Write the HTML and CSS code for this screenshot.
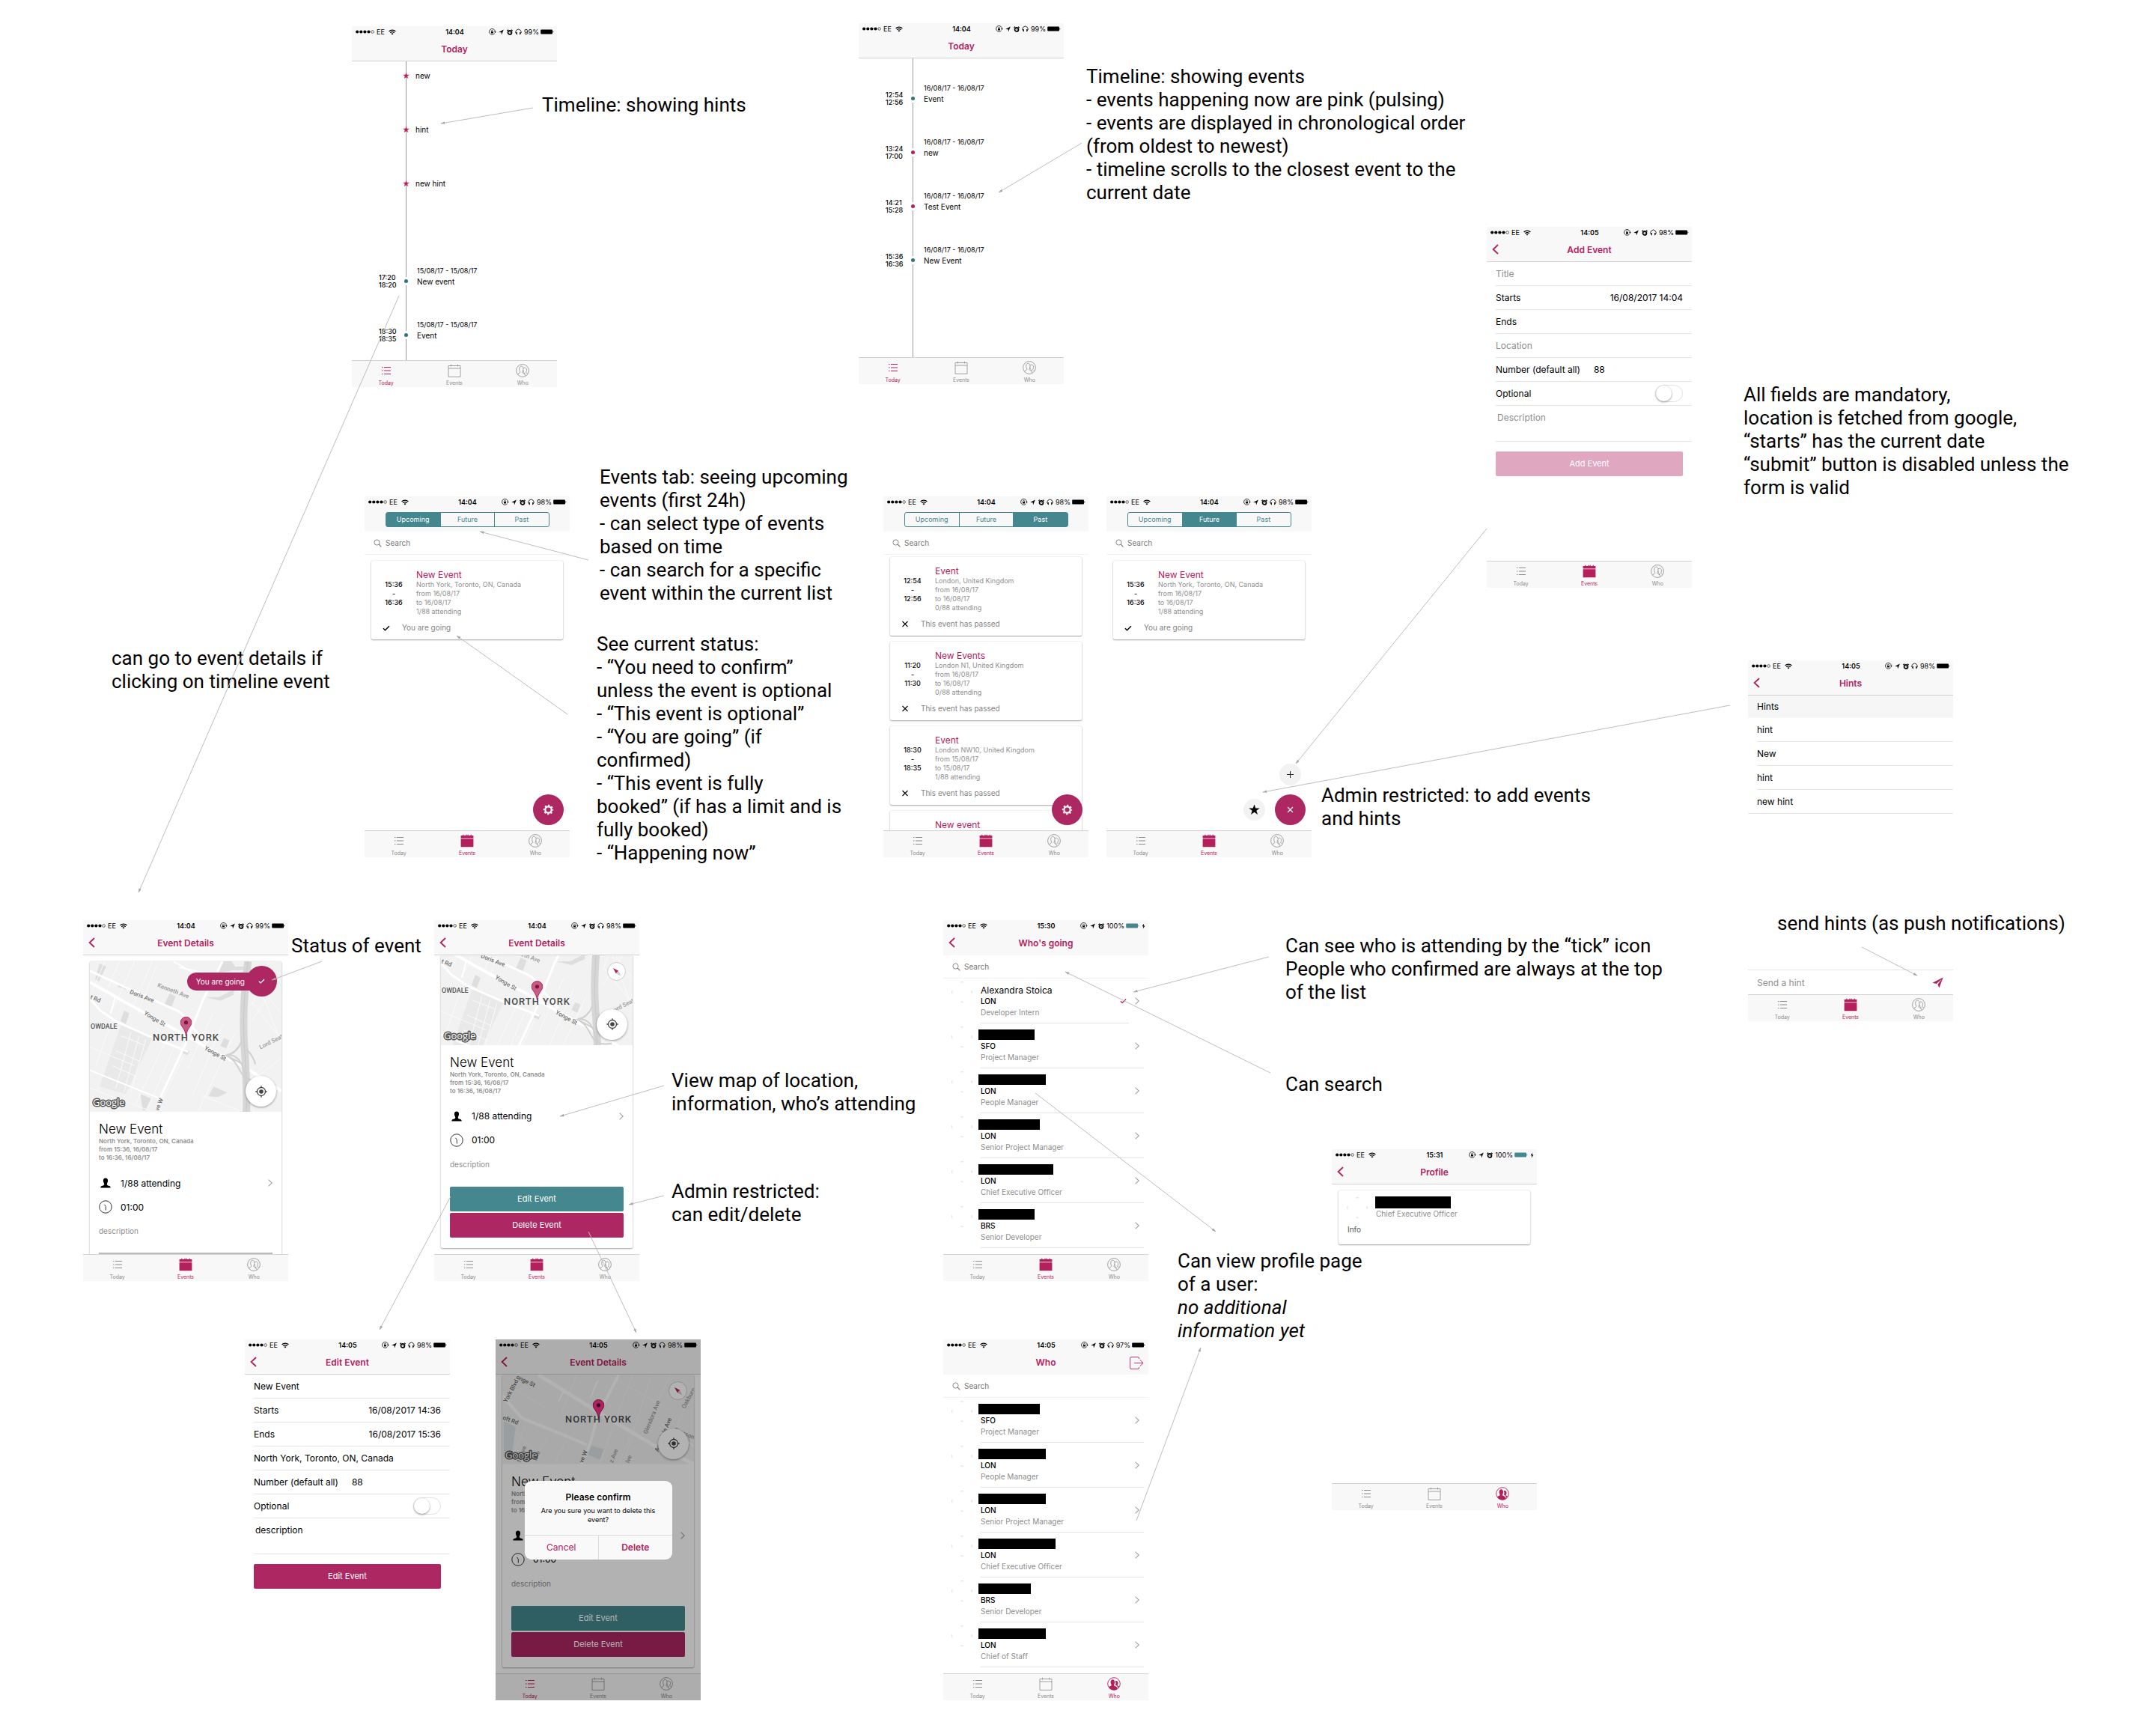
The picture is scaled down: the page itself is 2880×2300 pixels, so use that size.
FILE: index.html
```html
<!DOCTYPE html>
<html lang="en">
<head>
<meta charset="utf-8">
<title>Event app screen flow</title>
<link rel="stylesheet" href="styles.css">
</head>
<body>
<svg class="sprite" aria-hidden="true">
  <symbol id="signal" viewBox="0 0 25 5"><circle cx="2.2" cy="2.5" r="2.1"/><circle cx="7.3" cy="2.5" r="2.1"/><circle cx="12.4" cy="2.5" r="2.1"/><circle cx="17.5" cy="2.5" r="2.1"/><circle cx="22.6" cy="2.5" r="1.8" fill="none" stroke="currentColor" stroke-width=".6"/></symbol>
  <symbol id="wifi" viewBox="0 0 10 8"><path d="M.6 3a6.2 6.2 0 0 1 8.8 0M2.3 4.8a3.8 3.8 0 0 1 5.4 0" fill="none" stroke="currentColor" stroke-width="1.2"/><path d="M5 7.6 3.5 6a2.1 2.1 0 0 1 3 0z"/></symbol>
  <symbol id="lock" viewBox="0 0 10 9"><path d="M7.7 6.6A3.9 3.9 0 1 1 8.4 4.5" fill="none" stroke="currentColor" stroke-width=".8"/><path d="M7 4.3h2.8L8.4 6z"/><path d="M3 4.2h3v2.3H3z"/><path d="M3.5 4.3V3.3a1 1 0 0 1 2 0v1" fill="none" stroke="currentColor" stroke-width=".6"/></symbol>
  <symbol id="locate" viewBox="0 0 7 8"><path d="M6.8.6 4 7.5 3.7 4.2.2 3.9z"/></symbol>
  <symbol id="alarm" viewBox="0 0 8 8"><circle cx="4" cy="4.4" r="2.5" fill="none" stroke="currentColor" stroke-width="1.7"/><path d="M.4 2 2 .6M7.6 2 6 .6" stroke="currentColor" stroke-width="1.2"/><path d="M4 3v1.6h1" fill="none" stroke="currentColor" stroke-width=".5"/></symbol>
  <symbol id="phones" viewBox="0 0 9 9"><path d="M2 7.6A3.7 3.7 0 1 1 7 7.6" fill="none" stroke="currentColor" stroke-width=".8"/><path d="M1.3 5h1.5v3.2H2zM7.7 5H6.2v3.2H7z"/></symbol>
  <symbol id="battery" viewBox="0 0 18 7"><rect x=".2" y=".4" width="15.8" height="6.2" rx="1"/><path d="M16.5 2.3a1.3 1.3 0 0 1 0 2.4z"/></symbol>
  <symbol id="bolt" viewBox="0 0 5 8"><path d="M3.2.5.6 4.3H2.3L1.7 7.5 4.5 3.5H2.7z"/></symbol>
  <symbol id="back" viewBox="0 0 9 14"><path d="M8 1 1.6 7 8 13" fill="none" stroke="currentColor" stroke-width="1.8"/></symbol>
  <symbol id="next" viewBox="0 0 6 10"><path d="m.6.6 4.6 4.4L.6 9.4" fill="none" stroke="currentColor" stroke-width="1.1"/></symbol>
  <symbol id="list" viewBox="0 0 12 12"><path d="M0 1.5h1.5M0 6h1.5M0 10.5h1.5M3 1.5h9M3 6h9M3 10.5h9" stroke="currentColor" stroke-width="1"/></symbol>
  <symbol id="cal" viewBox="0 0 18 18"><path d="M1 2.5h16v14.8H1zM1 6h16M4.5.8v2.7M9 2.2V3M13.5.8v2.7" fill="none" stroke="currentColor" stroke-width=".8"/></symbol>
  <symbol id="cal-on" viewBox="0 0 18 18"><path d="M.6 2h2.6V.8h1.2V2h3V.8h1.2V2h1V.8h1.2V2h2.8V.8h1.2V2h2.6v3.6H.6zM.6 6.3h16.8V17.3H.6z"/></symbol>
  <symbol id="who" viewBox="0 0 18 18"><g fill="none" stroke="currentColor" stroke-width=".8"><circle cx="9" cy="9" r="8.4"/><path d="M2.5 14.2c.5-1.5 2.8-1.6 3.2-2.6.4-1-.9-2-1-4.3-.1-2.6 1-4.1 2.7-4.1s2.700 1.500 2.600 4.100c-.1 2.300-1.300 3.200-1 4.300.3.9 1.500 1.100 3 2.200"/><path d="M10.200 5.700c2.400-1.600 4.600.3 4.300 3-.1 1.600-1.100 2.500-.8 3.100.2.500 1.300.6 2 1.100M10 8.500c0 1.700 1 2.500.8 3.300M11.500 12c1 2 .5 3.500 1.600 4"/></g></symbol>
  <symbol id="who-on" viewBox="0 0 18 18"><circle cx="9" cy="9" r="8.300" fill="none" stroke="currentColor" stroke-width=".9"/><path d="M2 13.500c.7-1.500 3.400-1.300 3.600-2.400.2-.9-.9-1.700-1-4C4.500 4.700 5.700 3.300 7.300 3.300S10 4.700 10 7.100c-.1 2.300-1.200 3.100-1 4 .2 1.100 3.400 1.100 4 2.500l.6 2.500C10 18 5 18 2 13.500z"/><path d="M10.700 5.400c2-1.200 4 .3 3.800 2.900-.1 1.500-1 2.300-.8 2.900.2.600 1.500.6 2.300 1.300-.3 1-.9 1.800-1.500 2.300L13.300 12c-.5-.8-2-.7-2.200-1.300-.1-.6.4-1.200.4-2.500 0-1.300-.4-2-.8-2.800z"/></symbol>
  <symbol id="search" viewBox="0 0 11 11"><circle cx="4.500" cy="4.500" r="3.600" fill="none" stroke="currentColor" stroke-width=".9"/><path d="m7.200 7.200 3.200 3.200" stroke="currentColor" stroke-width="1.100"/></symbol>
  <symbol id="star" viewBox="0 0 10 10"><path d="M5 .3 6.200 3.700h3.600L6.900 5.800l1.100 3.600L5 7.200 2 9.400l1.100-3.600L.2 3.700h3.600z"/></symbol>
  <symbol id="tick" viewBox="0 0 10 8"><path d="M1 4.300 3.500 6.700 9 1.200" fill="none" stroke="currentColor" stroke-width="1.500"/></symbol>
  <symbol id="cross" viewBox="0 0 9 9"><path d="m1 1 7 7M8 1 1 8" stroke="currentColor" stroke-width="1.100"/></symbol>
  <symbol id="plus" viewBox="0 0 9 9"><path d="M4.500 0v9M0 4.500h9" stroke="currentColor" stroke-width="1"/></symbol>
  <symbol id="gear" viewBox="0 0 14 14"><circle cx="7" cy="7" r="3.900" fill="none" stroke="currentColor" stroke-width="2"/><circle cx="7" cy="7" r="5.500" fill="none" stroke="currentColor" stroke-width="1.500" stroke-dasharray="2.160 2.160" stroke-dashoffset="1.080"/></symbol>
  <symbol id="plane" viewBox="0 0 15 15"><path d="M14.600.4 9.400 14.500 7.400 10 13 2.500 5.700 9 .4 7.800z"/></symbol>
  <symbol id="logout" viewBox="0 0 19 17"><path d="M12.500 3V2A1.300 1.300 0 0 0 11.200.6H2A1.400 1.400 0 0 0 .6 2v13A1.400 1.400 0 0 0 2 16.400h9.200a1.300 1.300 0 0 0 1.300-1.400v-1M6 8.500h12M13.800 4.300l4.300 4.200-4.300 4.200" fill="none" stroke="currentColor" stroke-width=".9"/></symbol>
  <symbol id="person" viewBox="0 0 14 14"><path d="M7 .4c2 0 3.200 1.300 3.100 3.600C10 6.300 9 7 8.800 8.400c-.2 1.700 1.500 2 3.500 2.700 1 .4 1.300 1.200 1.300 2.500H.4c0-1.300.3-2.100 1.300-2.500 2-.7 3.700-1 3.500-2.700C5 7 4 6.300 3.900 4 3.800 1.700 5 .4 7 .4z"/></symbol>
  <symbol id="clock" viewBox="0 0 18 18"><circle cx="9" cy="9" r="8.200" fill="none" stroke="currentColor" stroke-width="1"/><path d="M7.500 5.800 9.300 8.500V13.500" fill="none" stroke="currentColor" stroke-width="1"/></symbol>
  <symbol id="avatar" viewBox="0 0 28 28"><path d="M12 .8h4M12 27.200h4M.8 12v4M27.200 12v4" stroke="#ddd" stroke-width="1"/></symbol>
  <symbol id="target" viewBox="0 0 16 16"><g fill="none" stroke="currentColor"><circle cx="8" cy="8" r="5.500" stroke-width="1.300"/><path d="M8 .3v2.500M8 13.200v2.500M.3 8h2.500M13.200 8h2.500" stroke-width="1.300"/></g><circle cx="8" cy="8" r="2.800"/></symbol>
  <symbol id="compass" viewBox="0 0 12 12"><path d="M1 1 8.200 4.800 4.800 8.200z" fill="#b4205c"/><path d="M11.500 11.500 8.200 4.800 4.800 8.200z" fill="#ccc"/></symbol>
  <symbol id="pin" viewBox="0 0 16 27"><path d="M8 .6A7.400 7.400 0 0 0 .6 8C.6 13.500 7 15.500 8 26.500 9 15.500 15.400 13.500 15.400 8A7.400 7.400 0 0 0 8 .6z" fill="#c95a86" stroke="#b02a64" stroke-width="1"/><circle cx="8" cy="8" r="2.600" fill="#7c173f"/></symbol>
  <symbol id="pin-dark" viewBox="0 0 16 27"><path d="M8 .6A7.400 7.400 0 0 0 .6 8C.6 13.500 7 15.500 8 26.500 9 15.500 15.400 13.500 15.400 8A7.400 7.400 0 0 0 8 .6z" fill="#ff2e88" stroke="#902454" stroke-width="1"/><circle cx="8" cy="8" r="2.600" fill="#581030"/></symbol>
  <defs>
  <g id="city">
    <rect width="257" height="202" fill="#f2f2f2"/>
    <path d="M43 82 85 101 48 178 13 168z" fill="#e9e9e9"/>
    <g fill="#dedede"><path d="m46 66 7 4-5 14-7-4zM107 43l8 4-6 16-9-5zM180 103l7 3-4 11-8-4zM126 117l8 3-3 6-7-3zM166 168l18 8-12 6-13-1zM13 3l9 4-10 20-5-3zM38 32l12 2-1 4-12-4zM178 0h12l5 7h12v5h-16l-18 4zM155 48l18 0 20-10v7l-18 8zM68 178l14 6-8 16-3 0z"/></g>
    <g fill="none" stroke="#fafafa" stroke-width="1">
      <path d="M20 0 4 38M40 0 18 50M60 0 32 62M84 0 58 60M30 78 8 140M90 5 64 70M240 0 217 60M217 80 257 20M217 20l40 50M217 55l40 50M222 20 257 110M217 160l40-30M220 202l-9-40 30-30M150 60l-30 60M165 70l-34 74M178 85l-40 94M195 95l-50 107M150 180l50 20M100 110 62 190M112 118 78 196M125 128 98 184M0 115 60 140M0 170l80 30M55 95l-20 75M66 100l-20 75M75 105l-20 70M42 100l30 12M35 120l32 14M30 140l32 14"/>
    </g>
    <g fill="none" stroke="#fff">
      <path d="M0 28 51 57 114 91 181 129Q205 138 229 156L257 174" stroke-width="4"/>
      <path d="M0 13 57 39 108 62Q124 68 130 78T157 110" stroke-width="3"/>
      <path d="M178 0 152 51 129 109 94 184 89 202" stroke-width="3"/>
      <path d="M0 50 14 66 36 81 81 101 132 121" stroke-width="3"/>
      <path d="M0 146 94 184M112 0 150 22 205 42M28 70 34 48M120 8l60 14" stroke-width="2"/>
    </g>
    <path d="M212 0C207 40 205 80 207 110S211 160 210 202" fill="none" stroke="#d6d6d6" stroke-width="10"/>
    <path d="M212 0C207 40 205 80 207 110S211 160 210 202" fill="none" stroke="#c9c9c9" stroke-width="1"/>
    <path d="M203 108c-4 12-12 16-20 18 12-2 20 6 24 22 3 12 2 20 2 26M198 116c-3 6-8 9-15 10 9 4 14 12 18 20 4 8 10 16 28 12M210 118c6 6 10 12 12 20M183 126l22 12" fill="none" stroke="#d0d0d0" stroke-width="2"/>
    <g class="street">
      <text transform="translate(53 43) rotate(21)">Doris Ave</text>
      <text transform="translate(90 34) rotate(21)" class="faint">Kenneth Ave</text>
      <text transform="translate(72 71) rotate(31)">Yonge St</text>
      <text transform="translate(153 118) rotate(29)">Yonge St</text>
      <text transform="translate(0 50) rotate(22)">t Rd</text>
      <text transform="translate(229 118) rotate(-27)" class="faint">Lord Seat</text>
      <text transform="translate(92 201) rotate(-68)">ve W</text>
    </g>
    <text x="1" y="90" class="district">OWDALE</text>
    <text x="129" y="106" class="town">NORTH YORK</text>
    <use href="#pin" x="121" y="74" width="16" height="27"/>
  </g>
  <g id="city-close">
    <rect width="257" height="120" fill="#f2f2f2"/>
    <g fill="none" stroke="#fafafa" stroke-width="1"><path d="M20 0 8 30M100 0 80 50M175 0 140 90M200 0 165 110M225 0 195 70M257 10l-30 80M0 60l60 60M30 70 10 120M60 85 40 120M85 90l-15 30M150 70l-20 50M170 85l-14 35M0 10 60 45M140 0l90 50"/></g>
    <path d="m2 62 16 8-6 44-10-4zM119 95l17 5-5 14-16-6zM236 88l16-8v14l-12 10z" fill="#dbe4e6"/>
    <g fill="none" stroke="#fff">
      <path d="M48 0 128 50 200 93 257 120" stroke-width="5"/>
      <path d="M156 0 128 55 118 92 106 120" stroke-width="4"/>
      <path d="M0 28 26 58 70 76 113 94" stroke-width="4"/>
      <path d="M214 66l43 30M85 18l-10 18M118 32l10-24" stroke-width="2"/>
    </g>
    <g class="street">
      <text transform="translate(18 5) rotate(26)">onge St</text>
      <text transform="translate(6 38) rotate(-62)">York Blvd</text>
      <text transform="translate(0 60) rotate(20)">oft Rd</text>
      <text transform="translate(194 80) rotate(-68)" class="faint">Glendora Ave</text>
      <text transform="translate(209 104) rotate(-68)">Avondale Ave</text>
      <text transform="translate(230 76) rotate(22)" class="faint">Everson</text>
      <text transform="translate(245 46) rotate(-62)" class="faint">Oakburn</text>
      <text transform="translate(24 118) rotate(-68)" class="faint">tti Ave</text>
      <text transform="translate(46 116) rotate(-68)" class="faint">Ave</text>
      <text transform="translate(108 119) rotate(-68)">ve W</text>
      <text transform="translate(148 119) rotate(-68)" class="faint">z Ave</text>
      <text transform="translate(170 119) rotate(-68)" class="faint">lve</text>
    </g>
    <text x="129" y="64" class="town">NORTH YORK</text>
    <use href="#pin-dark" x="121" y="33" width="16" height="27"/>
  </g>
  </defs>
</svg>

<main class="board">

<section class="phone at-timeline-hints" aria-label="Timeline with hints">
  <header class="top">
    <div class="status"><span><svg class="i-signal"><use href="#signal"/></svg>EE<svg class="i-wifi"><use href="#wifi"/></svg></span><b>14:04</b><span><svg class="i-lock"><use href="#lock"/></svg><svg class="i-loc"><use href="#locate"/></svg><svg class="i-alarm"><use href="#alarm"/></svg><svg class="i-phones"><use href="#phones"/></svg>99%<svg class="i-battery"><use href="#battery"/></svg></span></div>
    <div class="nav"><h2>Today</h2></div>
  </header>
  <div class="content">
    <ol class="timeline from-hint">
      <li class="hint"><svg><use href="#star"/></svg>new</li>
      <li class="hint"><svg><use href="#star"/></svg>hint</li>
      <li class="hint last"><svg><use href="#star"/></svg>new hint</li>
      <li class="moment"><span class="times">17:20<br>18:20</span><i class="dot"></i><span class="what"><small>15/08/17 - 15/08/17</small>New event</span></li>
      <li class="moment"><span class="times">18:30<br>18:35</span><i class="dot"></i><span class="what"><small>15/08/17 - 15/08/17</small>Event</span></li>
    </ol>
  </div>
  <nav class="tabs"><a href="#" class="on"><svg class="i-list"><use href="#list"/></svg>Today</a><a href="#"><svg><use href="#cal"/></svg>Events</a><a href="#"><svg><use href="#who"/></svg>Who</a></nav>
</section>

<section class="phone at-timeline-events" aria-label="Timeline with events">
  <header class="top">
    <div class="status"><span><svg class="i-signal"><use href="#signal"/></svg>EE<svg class="i-wifi"><use href="#wifi"/></svg></span><b>14:04</b><span><svg class="i-lock"><use href="#lock"/></svg><svg class="i-loc"><use href="#locate"/></svg><svg class="i-alarm"><use href="#alarm"/></svg><svg class="i-phones"><use href="#phones"/></svg>99%<svg class="i-battery"><use href="#battery"/></svg></span></div>
    <div class="nav"><h2>Today</h2></div>
  </header>
  <div class="content">
    <ol class="timeline">
      <li class="moment"><span class="times">12:54<br>12:56</span><i class="dot"></i><span class="what"><small>16/08/17 - 16/08/17</small>Event</span></li>
      <li class="moment"><span class="times">13:24<br>17:00</span><i class="dot now"></i><span class="what"><small>16/08/17 - 16/08/17</small>new</span></li>
      <li class="moment"><span class="times">14:21<br>15:28</span><i class="dot now"></i><span class="what"><small>16/08/17 - 16/08/17</small>Test Event</span></li>
      <li class="moment"><span class="times">15:36<br>16:36</span><i class="dot"></i><span class="what"><small>16/08/17 - 16/08/17</small>New Event</span></li>
    </ol>
  </div>
  <nav class="tabs"><a href="#" class="on"><svg class="i-list"><use href="#list"/></svg>Today</a><a href="#"><svg><use href="#cal"/></svg>Events</a><a href="#"><svg><use href="#who"/></svg>Who</a></nav>
</section>

<section class="phone at-add-event" aria-label="Add event">
  <header class="top">
    <div class="status"><span><svg class="i-signal"><use href="#signal"/></svg>EE<svg class="i-wifi"><use href="#wifi"/></svg></span><b>14:05</b><span><svg class="i-lock"><use href="#lock"/></svg><svg class="i-loc"><use href="#locate"/></svg><svg class="i-alarm"><use href="#alarm"/></svg><svg class="i-phones"><use href="#phones"/></svg>98%<svg class="i-battery"><use href="#battery"/></svg></span></div>
    <div class="nav"><button class="back" aria-label="Back"><svg><use href="#back"/></svg></button><h2>Add Event</h2></div>
  </header>
  <form class="content form">
    <div class="row"><input type="text" placeholder="Title" aria-label="Title"></div>
    <label class="row"><span>Starts</span><input class="end" type="text" value="16/08/2017 14:04"></label>
    <label class="row"><span>Ends</span><input class="end" type="text"></label>
    <div class="row"><input type="text" placeholder="Location" aria-label="Location"></div>
    <label class="row"><span>Number (default all)</span><input type="text" value="88"></label>
    <label class="row"><span>Optional</span><input class="switch" type="checkbox"></label>
    <div class="row tall"><textarea placeholder="Description" aria-label="Description"></textarea></div>
    <button class="wide" type="button" disabled>Add Event</button>
  </form>
  <nav class="tabs"><a href="#"><svg class="i-list"><use href="#list"/></svg>Today</a><a href="#" class="on"><svg><use href="#cal-on"/></svg>Events</a><a href="#"><svg><use href="#who"/></svg>Who</a></nav>
</section>

<section class="phone at-upcoming" aria-label="Upcoming events">
  <header class="top plain">
    <div class="status"><span><svg class="i-signal"><use href="#signal"/></svg>EE<svg class="i-wifi"><use href="#wifi"/></svg></span><b>14:04</b><span><svg class="i-lock"><use href="#lock"/></svg><svg class="i-loc"><use href="#locate"/></svg><svg class="i-alarm"><use href="#alarm"/></svg><svg class="i-phones"><use href="#phones"/></svg>98%<svg class="i-battery"><use href="#battery"/></svg></span></div>
    <div class="nav"><div class="segments"><button class="on">Upcoming</button><button>Future</button><button>Past</button></div></div>
  </header>
  <label class="search"><svg><use href="#search"/></svg><input type="search" placeholder="Search" aria-label="Search"></label>
  <div class="content cards">
    <article class="card event"><p class="when"><time>15:36</time><span>-</span><time>16:36</time></p><div><h3>New Event</h3><p class="facts">North York, Toronto, ON, Canada<br>from 16/08/17<br>to 16/08/17<br>1/88 attending</p></div><p class="state"><svg><use href="#tick"/></svg>You are going</p></article>
    <button class="fab" aria-label="Settings"><svg class="i-gear"><use href="#gear"/></svg></button>
  </div>
  <nav class="tabs"><a href="#"><svg class="i-list"><use href="#list"/></svg>Today</a><a href="#" class="on"><svg><use href="#cal-on"/></svg>Events</a><a href="#"><svg><use href="#who"/></svg>Who</a></nav>
</section>

<section class="phone at-past" aria-label="Past events">
  <header class="top plain">
    <div class="status"><span><svg class="i-signal"><use href="#signal"/></svg>EE<svg class="i-wifi"><use href="#wifi"/></svg></span><b>14:04</b><span><svg class="i-lock"><use href="#lock"/></svg><svg class="i-loc"><use href="#locate"/></svg><svg class="i-alarm"><use href="#alarm"/></svg><svg class="i-phones"><use href="#phones"/></svg>98%<svg class="i-battery"><use href="#battery"/></svg></span></div>
    <div class="nav"><div class="segments"><button>Upcoming</button><button>Future</button><button class="on">Past</button></div></div>
  </header>
  <label class="search"><svg><use href="#search"/></svg><input type="search" placeholder="Search" aria-label="Search"></label>
  <div class="content cards scrolled">
    <article class="card event"><p class="when"><time>12:54</time><span>-</span><time>12:56</time></p><div><h3>Event</h3><p class="facts">London, United Kingdom<br>from 16/08/17<br>to 16/08/17<br>0/88 attending</p></div><p class="state"><svg class="i-cross"><use href="#cross"/></svg>This event has passed</p></article>
    <article class="card event"><p class="when"><time>11:20</time><span>-</span><time>11:30</time></p><div><h3>New Events</h3><p class="facts">London N1, United Kingdom<br>from 16/08/17<br>to 16/08/17<br>0/88 attending</p></div><p class="state"><svg class="i-cross"><use href="#cross"/></svg>This event has passed</p></article>
    <article class="card event"><p class="when"><time>18:30</time><span>-</span><time>18:35</time></p><div><h3>Event</h3><p class="facts">London NW10, United Kingdom<br>from 15/08/17<br>to 15/08/17<br>1/88 attending</p></div><p class="state"><svg class="i-cross"><use href="#cross"/></svg>This event has passed</p></article>
    <article class="card event"><p class="when"></p><div><h3>New event</h3></div></article>
    <button class="fab" aria-label="Settings"><svg class="i-gear"><use href="#gear"/></svg></button>
  </div>
  <nav class="tabs"><a href="#"><svg class="i-list"><use href="#list"/></svg>Today</a><a href="#" class="on"><svg><use href="#cal-on"/></svg>Events</a><a href="#"><svg><use href="#who"/></svg>Who</a></nav>
</section>

<section class="phone at-future" aria-label="Future events">
  <header class="top plain">
    <div class="status"><span><svg class="i-signal"><use href="#signal"/></svg>EE<svg class="i-wifi"><use href="#wifi"/></svg></span><b>14:04</b><span><svg class="i-lock"><use href="#lock"/></svg><svg class="i-loc"><use href="#locate"/></svg><svg class="i-alarm"><use href="#alarm"/></svg><svg class="i-phones"><use href="#phones"/></svg>98%<svg class="i-battery"><use href="#battery"/></svg></span></div>
    <div class="nav"><div class="segments"><button>Upcoming</button><button class="on">Future</button><button>Past</button></div></div>
  </header>
  <label class="search"><svg><use href="#search"/></svg><input type="search" placeholder="Search" aria-label="Search"></label>
  <div class="content cards">
    <article class="card event"><p class="when"><time>15:36</time><span>-</span><time>16:36</time></p><div><h3>New Event</h3><p class="facts">North York, Toronto, ON, Canada<br>from 16/08/17<br>to 16/08/17<br>1/88 attending</p></div><p class="state"><svg><use href="#tick"/></svg>You are going</p></article>
    <button class="mini above" aria-label="Add event"><svg class="i-plus"><use href="#plus"/></svg></button>
    <button class="mini beside" aria-label="Hints"><svg class="i-star"><use href="#star"/></svg></button>
    <button class="fab" aria-label="Close"><svg class="i-close"><use href="#cross"/></svg></button>
  </div>
  <nav class="tabs"><a href="#"><svg class="i-list"><use href="#list"/></svg>Today</a><a href="#" class="on"><svg><use href="#cal-on"/></svg>Events</a><a href="#"><svg><use href="#who"/></svg>Who</a></nav>
</section>

<section class="phone at-hints" aria-label="Hints">
  <header class="top">
    <div class="status"><span><svg class="i-signal"><use href="#signal"/></svg>EE<svg class="i-wifi"><use href="#wifi"/></svg></span><b>14:05</b><span><svg class="i-lock"><use href="#lock"/></svg><svg class="i-loc"><use href="#locate"/></svg><svg class="i-alarm"><use href="#alarm"/></svg><svg class="i-phones"><use href="#phones"/></svg>98%<svg class="i-battery"><use href="#battery"/></svg></span></div>
    <div class="nav"><button class="back" aria-label="Back"><svg><use href="#back"/></svg></button><h2>Hints</h2></div>
  </header>
  <div class="content">
    <h3 class="group">Hints</h3>
    <ul class="plain-list"><li>hint</li><li>New</li><li>hint</li><li>new hint</li></ul>
  </div>
  <form class="send"><input type="text" placeholder="Send a hint" aria-label="Send a hint"><button type="button" aria-label="Send"><svg><use href="#plane"/></svg></button></form>
  <nav class="tabs"><a href="#"><svg class="i-list"><use href="#list"/></svg>Today</a><a href="#" class="on"><svg><use href="#cal-on"/></svg>Events</a><a href="#"><svg><use href="#who"/></svg>Who</a></nav>
</section>

<section class="phone at-details" aria-label="Event details">
  <header class="top">
    <div class="status"><span><svg class="i-signal"><use href="#signal"/></svg>EE<svg class="i-wifi"><use href="#wifi"/></svg></span><b>14:04</b><span><svg class="i-lock"><use href="#lock"/></svg><svg class="i-loc"><use href="#locate"/></svg><svg class="i-alarm"><use href="#alarm"/></svg><svg class="i-phones"><use href="#phones"/></svg>99%<svg class="i-battery"><use href="#battery"/></svg></span></div>
    <div class="nav"><button class="back" aria-label="Back"><svg><use href="#back"/></svg></button><h2>Event Details</h2></div>
  </header>
  <div class="content details unscrolled">
    <article class="card">
      <div class="map"><svg viewBox="0 0 257 202" role="img" aria-label="Map of North York"><use href="#city"/><text x="4" y="194" class="brand">Google</text></svg><p class="going"><span>You are going</span><svg><use href="#tick"/></svg></p><button class="target" aria-label="Centre map"><svg><use href="#target"/></svg></button></div>
      <div class="info">
        <h3>New Event</h3>
        <p class="place">North York, Toronto, ON, Canada<br>from 15:36, 16/08/17<br>to 16:36, 16/08/17</p>
        <a class="line" href="#"><svg class="i-person"><use href="#person"/></svg>1/88 attending<svg class="i-next"><use href="#next"/></svg></a>
        <p class="line"><svg class="i-clock"><use href="#clock"/></svg>01:00</p>
        <p class="about">description</p>
        <hr class="edge">
      </div>
    </article>
  </div>
  <nav class="tabs"><a href="#"><svg class="i-list"><use href="#list"/></svg>Today</a><a href="#" class="on"><svg><use href="#cal-on"/></svg>Events</a><a href="#"><svg><use href="#who"/></svg>Who</a></nav>
</section>

<section class="phone at-admin" aria-label="Event details for admins">
  <header class="top">
    <div class="status"><span><svg class="i-signal"><use href="#signal"/></svg>EE<svg class="i-wifi"><use href="#wifi"/></svg></span><b>14:04</b><span><svg class="i-lock"><use href="#lock"/></svg><svg class="i-loc"><use href="#locate"/></svg><svg class="i-alarm"><use href="#alarm"/></svg><svg class="i-phones"><use href="#phones"/></svg>98%<svg class="i-battery"><use href="#battery"/></svg></span></div>
    <div class="nav"><button class="back" aria-label="Back"><svg><use href="#back"/></svg></button><h2>Event Details</h2></div>
  </header>
  <div class="content details">
    <article class="card">
      <div class="map"><svg viewBox="0 40 257 120" role="img" aria-label="Map of North York"><use href="#city"/><text x="4" y="152" class="brand">Google</text></svg><button class="compass" aria-label="Compass"><svg><use href="#compass"/></svg></button><button class="target" aria-label="Centre map"><svg><use href="#target"/></svg></button></div>
      <div class="info">
        <h3>New Event</h3>
        <p class="place">North York, Toronto, ON, Canada<br>from 15:36, 16/08/17<br>to 16:36, 16/08/17</p>
        <a class="line" href="#"><svg class="i-person"><use href="#person"/></svg>1/88 attending<svg class="i-next"><use href="#next"/></svg></a>
        <p class="line"><svg class="i-clock"><use href="#clock"/></svg>01:00</p>
        <p class="about">description</p>
        <div class="actions"><button class="wide edit">Edit Event</button><button class="wide">Delete Event</button></div>
      </div>
    </article>
  </div>
  <nav class="tabs"><a href="#"><svg class="i-list"><use href="#list"/></svg>Today</a><a href="#" class="on"><svg><use href="#cal-on"/></svg>Events</a><a href="#"><svg><use href="#who"/></svg>Who</a></nav>
</section>

<section class="phone at-going" aria-label="Who's going">
  <header class="top plain">
    <div class="status"><span><svg class="i-signal"><use href="#signal"/></svg>EE<svg class="i-wifi"><use href="#wifi"/></svg></span><b>15:30</b><span><svg class="i-lock"><use href="#lock"/></svg><svg class="i-loc"><use href="#locate"/></svg><svg class="i-alarm"><use href="#alarm"/></svg>100%<svg class="i-battery charging"><use href="#battery"/></svg><svg class="i-bolt"><use href="#bolt"/></svg></span></div>
    <div class="nav"><button class="back" aria-label="Back"><svg><use href="#back"/></svg></button><h2>Who's going</h2></div>
  </header>
  <label class="search"><svg><use href="#search"/></svg><input type="search" placeholder="Search" aria-label="Search"></label>
  <ul class="content people">
    <li><svg class="avatar"><use href="#avatar"/></svg><div><strong>Alexandra Stoica</strong><b>LON</b><span>Developer Intern</span></div><svg class="i-yes"><use href="#tick"/></svg><svg class="i-next"><use href="#next"/></svg></li>
    <li><svg class="avatar"><use href="#avatar"/></svg><div><i class="redacted" style="width:75px"></i><b>SFO</b><span>Project Manager</span></div><svg class="i-next"><use href="#next"/></svg></li>
    <li><svg class="avatar"><use href="#avatar"/></svg><div><i class="redacted" style="width:90px"></i><b>LON</b><span>People Manager</span></div><svg class="i-next"><use href="#next"/></svg></li>
    <li><svg class="avatar"><use href="#avatar"/></svg><div><i class="redacted" style="width:82px"></i><b>LON</b><span>Senior Project Manager</span></div><svg class="i-next"><use href="#next"/></svg></li>
    <li><svg class="avatar"><use href="#avatar"/></svg><div><i class="redacted" style="width:100px"></i><b>LON</b><span>Chief Executive Officer</span></div><svg class="i-next"><use href="#next"/></svg></li>
    <li><svg class="avatar"><use href="#avatar"/></svg><div><i class="redacted" style="width:75px"></i><b>BRS</b><span>Senior Developer</span></div><svg class="i-next"><use href="#next"/></svg></li>
  </ul>
  <nav class="tabs"><a href="#"><svg class="i-list"><use href="#list"/></svg>Today</a><a href="#" class="on"><svg><use href="#cal-on"/></svg>Events</a><a href="#"><svg><use href="#who"/></svg>Who</a></nav>
</section>

<section class="phone at-profile" aria-label="Profile">
  <header class="top">
    <div class="status"><span><svg class="i-signal"><use href="#signal"/></svg>EE<svg class="i-wifi"><use href="#wifi"/></svg></span><b>15:31</b><span><svg class="i-lock"><use href="#lock"/></svg><svg class="i-loc"><use href="#locate"/></svg><svg class="i-alarm"><use href="#alarm"/></svg>100%<svg class="i-battery charging"><use href="#battery"/></svg><svg class="i-bolt"><use href="#bolt"/></svg></span></div>
    <div class="nav"><button class="back" aria-label="Back"><svg><use href="#back"/></svg></button><h2>Profile</h2></div>
  </header>
  <div class="content cards">
    <article class="card profile"><svg class="avatar"><use href="#avatar"/></svg><div><i class="redacted" style="width:101px"></i><span>Chief Executive Officer</span></div><p>Info</p></article>
  </div>
  <nav class="tabs"><a href="#"><svg class="i-list"><use href="#list"/></svg>Today</a><a href="#"><svg><use href="#cal"/></svg>Events</a><a href="#" class="on"><svg><use href="#who-on"/></svg>Who</a></nav>
</section>

<section class="phone at-edit" aria-label="Edit event">
  <header class="top">
    <div class="status"><span><svg class="i-signal"><use href="#signal"/></svg>EE<svg class="i-wifi"><use href="#wifi"/></svg></span><b>14:05</b><span><svg class="i-lock"><use href="#lock"/></svg><svg class="i-loc"><use href="#locate"/></svg><svg class="i-alarm"><use href="#alarm"/></svg><svg class="i-phones"><use href="#phones"/></svg>98%<svg class="i-battery"><use href="#battery"/></svg></span></div>
    <div class="nav"><button class="back" aria-label="Back"><svg><use href="#back"/></svg></button><h2>Edit Event</h2></div>
  </header>
  <form class="content form">
    <div class="row"><input type="text" value="New Event" aria-label="Title"></div>
    <label class="row"><span>Starts</span><input class="end" type="text" value="16/08/2017 14:36"></label>
    <label class="row"><span>Ends</span><input class="end" type="text" value="16/08/2017 15:36"></label>
    <div class="row"><input type="text" value="North York, Toronto, ON, Canada" aria-label="Location"></div>
    <label class="row"><span>Number (default all)</span><input type="text" value="88"></label>
    <label class="row"><span>Optional</span><input class="switch" type="checkbox"></label>
    <div class="row tall"><textarea aria-label="Description">description</textarea></div>
    <button class="wide" type="button">Edit Event</button>
  </form>
</section>

<section class="phone at-confirm" aria-label="Confirm deletion">
  <header class="top">
    <div class="status"><span><svg class="i-signal"><use href="#signal"/></svg>EE<svg class="i-wifi"><use href="#wifi"/></svg></span><b>14:05</b><span><svg class="i-lock"><use href="#lock"/></svg><svg class="i-loc"><use href="#locate"/></svg><svg class="i-alarm"><use href="#alarm"/></svg><svg class="i-phones"><use href="#phones"/></svg>98%<svg class="i-battery"><use href="#battery"/></svg></span></div>
    <div class="nav"><button class="back" aria-label="Back"><svg><use href="#back"/></svg></button><h2>Event Details</h2></div>
  </header>
  <div class="content details">
    <article class="card">
      <div class="map"><svg viewBox="0 0 257 120" role="img" aria-label="Map of North York"><use href="#city-close"/><text x="4" y="112" class="brand">Google</text></svg><button class="compass" aria-label="Compass"><svg><use href="#compass"/></svg></button><button class="target" aria-label="Centre map"><svg><use href="#target"/></svg></button></div>
      <div class="info">
        <h3>New Event</h3>
        <p class="place">North York, Toronto, ON, Canada<br>from 15:36, 16/08/17<br>to 16:36, 16/08/17</p>
        <a class="line" href="#"><svg class="i-person"><use href="#person"/></svg>1/88 attending<svg class="i-next"><use href="#next"/></svg></a>
        <p class="line"><svg class="i-clock"><use href="#clock"/></svg>01:00</p>
        <p class="about">description</p>
        <div class="actions"><button class="wide edit">Edit Event</button><button class="wide">Delete Event</button></div>
      </div>
    </article>
  </div>
  <nav class="tabs"><a href="#" class="on"><svg class="i-list"><use href="#list"/></svg>Today</a><a href="#"><svg><use href="#cal"/></svg>Events</a><a href="#"><svg><use href="#who"/></svg>Who</a></nav>
  <div class="veil">
    <div class="alert" role="alertdialog" aria-label="Please confirm">
      <h3>Please confirm</h3>
      <p>Are you sure you want to delete this event?</p>
      <div class="choices"><button>Cancel</button><button class="strong">Delete</button></div>
    </div>
  </div>
</section>

<section class="phone at-who" aria-label="Who">
  <header class="top plain">
    <div class="status"><span><svg class="i-signal"><use href="#signal"/></svg>EE<svg class="i-wifi"><use href="#wifi"/></svg></span><b>14:05</b><span><svg class="i-lock"><use href="#lock"/></svg><svg class="i-loc"><use href="#locate"/></svg><svg class="i-alarm"><use href="#alarm"/></svg><svg class="i-phones"><use href="#phones"/></svg>97%<svg class="i-battery"><use href="#battery"/></svg></span></div>
    <div class="nav"><h2>Who</h2><button class="logout" aria-label="Log out"><svg><use href="#logout"/></svg></button></div>
  </header>
  <label class="search"><svg><use href="#search"/></svg><input type="search" placeholder="Search" aria-label="Search"></label>
  <ul class="content people">
    <li><svg class="avatar"><use href="#avatar"/></svg><div><i class="redacted" style="width:82px"></i><b>SFO</b><span>Project Manager</span></div><svg class="i-next"><use href="#next"/></svg></li>
    <li><svg class="avatar"><use href="#avatar"/></svg><div><i class="redacted" style="width:90px"></i><b>LON</b><span>People Manager</span></div><svg class="i-next"><use href="#next"/></svg></li>
    <li><svg class="avatar"><use href="#avatar"/></svg><div><i class="redacted" style="width:90px"></i><b>LON</b><span>Senior Project Manager</span></div><svg class="i-next"><use href="#next"/></svg></li>
    <li><svg class="avatar"><use href="#avatar"/></svg><div><i class="redacted" style="width:103px"></i><b>LON</b><span>Chief Executive Officer</span></div><svg class="i-next"><use href="#next"/></svg></li>
    <li><svg class="avatar"><use href="#avatar"/></svg><div><i class="redacted" style="width:70px"></i><b>BRS</b><span>Senior Developer</span></div><svg class="i-next"><use href="#next"/></svg></li>
    <li><svg class="avatar"><use href="#avatar"/></svg><div><i class="redacted" style="width:90px"></i><b>LON</b><span>Chief of Staff</span></div><svg class="i-next"><use href="#next"/></svg></li>
  </ul>
  <nav class="tabs"><a href="#"><svg class="i-list"><use href="#list"/></svg>Today</a><a href="#"><svg><use href="#cal"/></svg>Events</a><a href="#" class="on"><svg><use href="#who-on"/></svg>Who</a></nav>
</section>

<p class="note on-hints-timeline">Timeline: showing hints</p>
<p class="note on-events-timeline">Timeline: showing events<br>- events happening now are pink (pulsing)<br>- events are displayed in chronological order<br>(from oldest to newest)<br>- timeline scrolls to the closest event to the<br>current date</p>
<p class="note on-form">All fields are mandatory,<br>location is fetched from google,<br>“starts” has the current date<br>“submit” button is disabled unless the<br>form is valid</p>
<p class="note on-tabs">Events tab: seeing upcoming<br>events (first 24h)<br>- can select type of events<br>based on time<br>- can search for a specific<br>event within the current list</p>
<p class="note on-status">See current status:<br>- “You need to confirm”<br>unless the event is optional<br>- “This event is optional”<br>- “You are going” (if<br>confirmed)<br>- “This event is fully<br>booked” (if has a limit and is<br>fully booked)<br>- “Happening now”</p>
<p class="note on-menu">Admin restricted: to add events<br>and hints</p>
<p class="note on-click">can go to event details if<br>clicking on timeline event</p>
<p class="note on-going">Status of event</p>
<p class="note on-map">View map of location,<br>information, who’s attending</p>
<p class="note on-admin">Admin restricted:<br>can edit/delete</p>
<p class="note on-tick">Can see who is attending by the “tick” icon<br>People who confirmed are always at the top<br>of the list</p>
<p class="note on-search">Can search</p>
<p class="note on-profile">Can view profile page<br>of a user:<br><em>no additional<br>information yet</em></p>
<p class="note on-send">send hints (as push notifications)</p>

<svg class="arrows" aria-hidden="true">
  <defs><marker id="tip" viewBox="0 0 6 4" refX="5.500" refY="2" markerWidth="6" markerHeight="4" orient="auto"><path d="M0 .2 6 2 0 3.800z" fill="#a8a8a8"/></marker></defs>
  <path d="M712 144 589 165"/>
  <path d="M1445 191 1334 257"/>
  <path d="M533 395 185 1192"/>
  <path d="M786 748 641 710"/>
  <path d="M758 954 610 849"/>
  <path d="M1986 706 1731 1020"/>
  <path d="M2311 942 1687 1058"/>
  <path d="M2487 1265 2561 1303"/>
  <path d="M430 1284 363 1309"/>
  <path d="M887 1450 748 1491"/>
  <path d="M887 1597 840 1609"/>
  <path d="M602 1598 507 1776"/>
  <path d="M786 1645 850 1780"/>
  <path d="M1695 1278 1514 1325"/>
  <path d="M1697 1433 1423 1298"/>
  <path d="M1383 1460 1624 1645"/>
  <path d="M1518 2031 1604 1800"/>
</svg>
</main>
</body>
</html>
```
FILE: styles.css
```css
:root {
  --pink: #ad2862;
  --title: #b4205c;
  --teal: #44878f;
  --bar: #f8f8f8;
  --rule: #e4e4e4;
  --grey: #8e8e8e;
}

* { box-sizing: border-box; margin: 0; padding: 0; }
body { background: #fff; color: #000; font-family: Inter, "Liberation Sans", sans-serif; }
button, input, textarea { font: inherit; color: inherit; background: none; border: 0; outline: 0; appearance: none; }
a { color: inherit; text-decoration: none; }
ol, ul { list-style: none; }
svg { display: block; flex: none; fill: currentColor; }
.sprite { position: absolute; width: 0; height: 0; }

/* Canvas */
.board { position: relative; min-height: 100vh; overflow: hidden; }
.phone, .note { position: absolute; }
.arrows { position: absolute; inset: 0; width: 100%; height: 100%; pointer-events: none; }
.arrows > path { fill: none; stroke: #bdbdbd; stroke-width: 1; marker-end: url(#tip); }

.at-timeline-hints { left: 470px; top: 35px; }
.at-timeline-events { left: 1147px; top: 31px; }
.at-add-event { left: 1986px; top: 303px; }
.at-upcoming { left: 487px; top: 663px; }
.at-past { left: 1180px; top: 663px; }
.at-future { left: 1478px; top: 663px; }
.at-hints { left: 2335px; top: 882px; }
.at-details { left: 111px; top: 1229px; }
.at-admin { left: 580px; top: 1229px; }
.at-going { left: 1260px; top: 1229px; }
.at-profile { left: 1779px; top: 1535px; }
.at-edit { left: 327px; top: 1789px; }
.at-confirm { left: 662px; top: 1789px; }
.at-who { left: 1260px; top: 1789px; }

.note { font: 26px/31px Roboto, "Liberation Sans", sans-serif; white-space: nowrap; }
.on-hints-timeline { left: 724px; top: 125px; }
.on-events-timeline { left: 1451px; top: 87px; }
.on-form { left: 2329px; top: 512px; }
.on-tabs { left: 801px; top: 622px; }
.on-status { left: 797px; top: 845px; }
.on-menu { left: 1765px; top: 1047px; }
.on-click { left: 149px; top: 864px; }
.on-going { left: 389px; top: 1248px; }
.on-map { left: 897px; top: 1428px; }
.on-admin { left: 897px; top: 1576px; }
.on-tick { left: 1717px; top: 1248px; }
.on-search { left: 1717px; top: 1433px; }
.on-profile { left: 1573px; top: 1669px; }
.on-send { left: 2374px; top: 1218px; }

/* Phone frame */
.phone { display: flex; flex-direction: column; width: 274px; height: 482px; overflow: hidden; background: #fff; font-size: 12px; line-height: 15px; }
.content { position: relative; flex: 1; min-height: 0; overflow: hidden; }
.top { flex: none; background: var(--bar); border-bottom: 1px solid #d2d2d2; }
.top.plain { border-bottom-color: var(--bar); }
.status { display: grid; grid-template-columns: 1fr auto 1fr; align-items: center; height: 15px; padding: 0 4px 0 5px; font-size: 9px; line-height: 15px; }
.status b { font-weight: 600; }
.status span { display: flex; align-items: center; gap: 3px; }
.status span:last-child { justify-content: flex-end; }
.i-signal { width: 25px; height: 5px; }
.i-wifi { width: 10px; height: 8px; margin-left: 2px; }
.i-lock { width: 10px; height: 9px; }
.i-loc { width: 7px; height: 8px; }
.i-alarm { width: 8px; height: 8px; margin-left: 1px; }
.i-phones { width: 9px; height: 9px; }
.i-battery { width: 18px; height: 7px; margin-left: -1px; }
.i-battery.charging { color: var(--teal); }
.i-bolt { width: 5px; height: 8px; }
.nav { position: relative; display: flex; align-items: center; justify-content: center; height: 31px; color: var(--title); }
.nav h2 { font-size: 12px; font-weight: 600; }
.back, .logout { position: absolute; top: 8px; }
.back { left: 7px; }
.back svg { width: 9px; height: 14px; }
.logout { right: 6px; }
.logout svg { width: 19px; height: 17px; }

.tabs { flex: none; display: grid; grid-template-columns: repeat(3, 1fr); height: 36px; background: var(--bar); border-top: 1px solid #d2d2d2; color: #8c8c8c; font-size: 7px; line-height: 9px; }
.tabs a { display: flex; flex-direction: column; align-items: center; gap: 3px; padding-top: 4px; }
.tabs svg { width: 18px; height: 18px; }
.tabs .i-list { width: 12px; height: 12px; margin: 3px 0; }
.tabs .on { color: var(--title); }

/* Timeline */
.timeline { height: 100%; padding-top: 33px; background: linear-gradient(#9a9a9a, #9a9a9a) 72px 0 / 1px 100% no-repeat; }
.timeline.from-hint { padding-top: 7px; }
.timeline li { height: 72px; }
.hint { display: flex; gap: 8px; padding-left: 68px; font-size: 10px; line-height: 24px; }
.hint svg { width: 9px; height: 24px; color: var(--title); }
.timeline .hint.last { height: 122px; }
.moment { display: flex; align-items: flex-start; }
.times { width: 59px; padding: 11px 0 0 36px; font-size: 9px; font-weight: 500; line-height: 10px; }
.dot { width: 5px; height: 5px; margin: 18px 12px 0 11px; border-radius: 50%; background: #2d7480; box-shadow: 0 0 0 3px #fff; }
.dot.now { background: var(--title); }
.what { font-size: 10px; line-height: 15px; }
.what small { display: block; font-size: 9px; line-height: 14px; }

/* Forms */
.row { display: flex; align-items: center; gap: 18px; height: 32px; margin-left: 12px; padding-right: 12px; border-bottom: 1px solid var(--rule); }
.row.tall { height: 48px; align-items: flex-start; padding-top: 8px; }
.row input[type="text"] { flex: 1; min-width: 0; }
.row .end { text-align: right; }
.row textarea { flex: 1; height: 30px; padding-left: 2px; resize: none; overflow: hidden; }
::placeholder { color: var(--grey); opacity: 1; }
.switch { position: relative; width: 37px; height: 23px; margin-left: auto; border: 1px solid #e2e2e2; border-radius: 12px; }
.switch::before { content: ""; position: absolute; left: 0; top: 0; width: 21px; height: 21px; border-radius: 50%; background: #fff; box-shadow: 0 1px 3px #0006; }
.wide { display: block; width: 100%; height: 33px; border-radius: 2px; background: var(--pink); color: #fff; font-size: 11px; }
.wide:disabled { background: #dfa8c0; }
.form .wide { width: auto; margin: 13px 12px 0; min-width: 250px; }

/* Events */
.segments { display: grid; grid-template-columns: repeat(3, 1fr); width: 219px; height: 20px; border: 1px solid var(--teal); border-radius: 3px; color: var(--teal); font-size: 9px; }
.segments button + button { border-left: 1px solid var(--teal); }
.segments .on { background: var(--teal); color: #fff; }
.search { flex: none; display: flex; align-items: center; gap: 5px; height: 31px; padding: 0 12px; border-bottom: 1px solid #f2f2f2; color: #777; font-size: 10px; }
.search svg { width: 11px; height: 11px; }
.search ::placeholder { color: #777; }
.search input { flex: 1; }
.cards { padding: 8px 9px 0; }
.cards.scrolled { padding-top: 3px; }
.card { background: #fff; border-radius: 2px; box-shadow: 0 0 2px #0002, 0 1px 2px #0005; }
.event { display: grid; grid-template-columns: 60px 1fr; margin-bottom: 8px; padding-top: 11px; min-height: 105px; }
.event h3 { color: var(--title); font-size: 12px; font-weight: 400; }
.facts { color: #8f8f8f; font-size: 9px; line-height: 12px; }
.when { display: flex; flex-direction: column; align-items: center; padding-top: 15px; font-size: 9px; font-weight: 500; line-height: 12px; }
.state { grid-column: 1 / -1; display: flex; align-items: center; gap: 16px; height: 31px; padding-left: 15px; color: #848484; font-size: 10px; }
.state svg { width: 10px; height: 8px; color: #000; }
.state .i-cross { width: 10px; height: 9px; }
.fab, .mini { position: absolute; display: grid; place-items: center; border-radius: 50%; }
.fab { right: 8px; bottom: 7px; width: 41px; height: 41px; background: var(--pink); color: #fff; }
.mini { width: 29px; height: 29px; background: #f2f2f2; color: #222; }
.mini.above { right: 14px; bottom: 60px; }
.mini.beside { right: 62px; bottom: 13px; color: #000; }
.i-gear { width: 15px; height: 15px; }
.i-plus { width: 9px; height: 9px; }
.i-star { width: 15px; height: 15px; }
.i-close { width: 9px; height: 9px; }

/* Hints */
.group { height: 30px; padding-left: 12px; background: #f6f6f6; font-size: 12px; font-weight: 400; line-height: 30px; }
.plain-list li { height: 32px; margin-left: 12px; border-bottom: 1px solid var(--rule); line-height: 32px; }
.plain-list li:last-child { margin-left: 0; padding-left: 12px; }
.send { flex: none; display: flex; align-items: center; justify-content: space-between; height: 33px; padding: 0 13px 0 12px; border-top: 1px solid var(--rule); }
.send button { color: var(--title); }
.send svg { width: 15px; height: 15px; }

/* Event details */
.details { padding: 0 9px; }
.details.unscrolled { padding-top: 8px; }
.map { position: relative; overflow: hidden; }
.map > svg { width: 100%; height: auto; }
.street { font: 500 8px Roboto, sans-serif; fill: #6e6e6e; }
.street .faint { fill: #9c9c9c; }
.district { font: 500 9px Roboto, sans-serif; fill: #555; }
.town { font: 500 13px Roboto, sans-serif; letter-spacing: 1px; text-anchor: middle; fill: #4c4c4c; }
.brand { font: 500 13px "Open Sans", sans-serif; fill: #fff; stroke: #555; stroke-width: 3px; paint-order: stroke; stroke-linejoin: round; }
.going { position: absolute; right: 6px; top: 6px; display: flex; align-items: center; color: #fff; font-size: 10px; }
.going span { padding: 0 18px 0 12px; margin-right: -16px; border-radius: 12px; background: var(--pink); line-height: 24px; }
.going svg { width: 41px; height: 41px; padding: 16px; border-radius: 50%; background: var(--pink); }
.target, .compass { position: absolute; display: grid; place-items: center; border-radius: 50%; background: #fff; }
.target { right: 7px; bottom: 7px; width: 41px; height: 41px; color: #444; box-shadow: 0 1px 3px #0006; }
.target svg { width: 16px; height: 16px; }
.compass { right: 9px; top: 9px; width: 25px; height: 25px; border: 1px solid #ccc; }
.compass svg { width: 12px; height: 12px; }
.info { padding: 12px 12px 14px; }
.info h3 { font-size: 17px; font-weight: 300; line-height: 22px; }
.place { padding-bottom: 12px; color: #8f8f8f; font-size: 8px; font-weight: 600; line-height: 11px; }
.line { display: flex; align-items: center; height: 32px; }
.i-person { width: 14px; height: 14px; margin: 0 13px 0 2px; }
.i-clock { width: 18px; height: 18px; margin-right: 11px; color: #333; }
.i-next { width: 6px; height: 10px; margin-left: auto; color: #a0a0a0; }
.about { height: 32px; color: var(--grey); font-size: 10px; line-height: 32px; }
.actions { display: grid; gap: 2px; margin-top: 14px; }
.wide.edit { background: var(--teal); }
.edge { height: 2px; margin-top: 13px; border: 0; background: #bdbdbd; }

/* People */
.people li { display: flex; align-items: center; height: 60px; padding-right: 12px; }
.people .avatar { align-self: flex-start; margin: 4px 11px 0; }
.avatar { width: 28px; height: 28px; }
.people div { flex: 1; display: flex; flex-direction: column; justify-content: flex-end; height: 60px; padding-bottom: 6px; margin-right: -12px; border-bottom: 1px solid var(--rule); }
.people strong { font-size: 12px; font-weight: 400; }
.people b { font-size: 10px; font-weight: 500; }
.people span, .profile span { color: var(--grey); font-size: 10px; }
.redacted { height: 14px; margin: 0 0 1px -3px; background: #000; }
.people .i-next { margin-left: 0; }
.i-yes { width: 9px; height: 8px; margin-right: 11px; color: var(--title); }
.profile { display: grid; grid-template-columns: 28px 1fr; gap: 0 10px; padding: 8px 11px 12px; }
.profile .avatar { margin-top: 1px; }
.profile div { display: flex; flex-direction: column; padding-left: 1px; }
.profile .redacted { height: 16px; margin: 0 0 0 -1px; }
.profile p { grid-column: 1 / -1; padding: 6px 1px 0; color: #555; font-size: 10px; }

/* Confirmation */
.veil { position: absolute; inset: 0; display: grid; place-items: center; background: #0000004d; }
.alert { width: 197px; border-radius: 9px; overflow: hidden; background: #f9f9f9; text-align: center; }
.alert h3 { padding-top: 14px; font-size: 12px; font-weight: 600; }
.alert p { padding: 5px 16px 14px; font-size: 9px; line-height: 12px; }
.choices { display: grid; grid-template-columns: 1fr 1fr; border-top: 1px solid #dcdcdc; color: var(--title); }
.choices button { height: 32px; }
.choices .strong { border-left: 1px solid #dcdcdc; font-weight: 600; }
```
